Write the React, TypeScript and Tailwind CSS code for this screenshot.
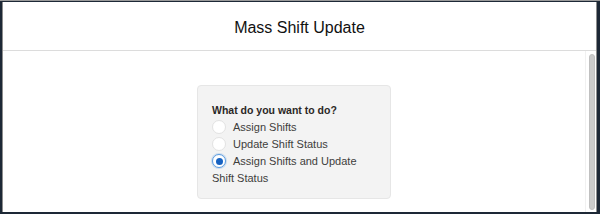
import React from "react";

function Radio({ checked }: { checked?: boolean }) {
  return checked ? (
    <span className="inline-flex items-center justify-center w-[14px] h-[14px] rounded-full border border-[#5a9be0] bg-white align-middle mr-[7px] relative -top-[1px] shadow-[0_0_0_1px_rgba(90,155,224,0.25)]">
      <span className="w-[7px] h-[7px] rounded-full bg-[#1762c1]" />
    </span>
  ) : (
    <span className="inline-block w-[14px] h-[14px] rounded-full border border-[#e2e2e2] bg-white align-middle mr-[7px] relative -top-[1px]" />
  );
}

export default function App() {
  return (
    <div
      className="w-[600px] h-[214px] bg-[#1d2836] pt-[1px] pl-[2px] pr-[3px] pb-[2px] border-t border-[#9a9a9a]"
      style={{ fontFamily: '"Liberation Sans", Arial, sans-serif' }}
    >
      <div className="h-full bg-white border-l border-r border-[#8d8d8d] flex flex-col">
        <div className="h-[49px] shrink-0 flex items-center justify-center border-b border-[#dcdcdc]">
          <span className="text-[16px] text-[#111111] pt-[3px]">Mass Shift Update</span>
        </div>
        <div className="flex-1 flex min-h-0">
          <div className="flex-1 flex justify-center pt-[34px]">
            <div className="w-[194px] h-[114px] bg-[#f3f3f3] border border-[#e6e6e6] rounded-[4px] pt-[16px] pl-[14px] pr-[10px]">
              <div className="text-[10.5px] font-bold text-[#2b2826] leading-[17px]">What do you want to do?</div>
              <div className="text-[11px] text-[#3e3e3c] leading-[17px]">
                <div>
                  <Radio />
                  Assign Shifts
                </div>
                <div>
                  <Radio />
                  Update Shift Status
                </div>
                <div>
                  <Radio checked />
                  Assign Shifts and Update
                  <br />
                  Shift Status
                </div>
              </div>
            </div>
          </div>
          <div className="w-[11px] shrink-0 border-l border-[#f1f1f1] pt-[3px] pb-[2px] pl-[3px]">
            <div className="w-[6px] h-full rounded-full bg-[#cbcbcb] border border-[#c0c0c0]" />
          </div>
        </div>
      </div>
    </div>
  );
}
